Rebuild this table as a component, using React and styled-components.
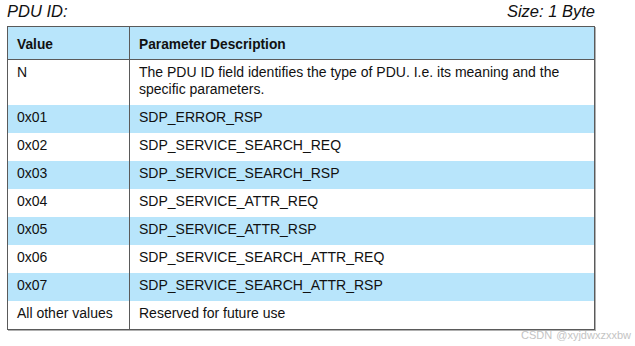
import React from "react";
import styled, { createGlobalStyle } from "styled-components";

const Global = createGlobalStyle`
  html, body { margin: 0; padding: 0; background: #ffffff; overflow: hidden; }
  body { font-family: "Liberation Sans", Arial, sans-serif; color: #111; }
`;

const Page = styled.div`
  position: relative;
  width: 635px;
  height: 346px;
  padding: 1px 0 0 7px;
  box-sizing: border-box;
  overflow: hidden;
`;

const TitleBar = styled.div`
  display: flex;
  justify-content: space-between;
  width: 588px;
  height: 20px;
  margin-bottom: 5px;
  font-style: italic;
  font-size: 16.5px;
  line-height: 20px;
  color: #111;
`;

const Table = styled.div`
  width: 588px;
  box-sizing: border-box;
  border: 1px solid #5a5a5a;
  box-shadow: 1px 1px 0 #b0b0b0;
`;

const Row = styled.div`
  display: grid;
  grid-template-columns: 121px 1px 1fr;
  background: ${(p) => (p.$shaded ? "#b8e5fb" : "#ffffff")};
  border-bottom: ${(p) => (p.$header ? "1px solid #5a5a5a" : "none")};
`;

const Divider = styled.div`
  background: #5a5a5a;
`;

const Cell = styled.div`
  font-size: ${(p) => (p.$header ? "13.75px" : "14px")};
  line-height: 17px;
  font-weight: ${(p) => (p.$header ? 700 : 400)};
  padding: ${(p) => (p.$header ? "9px 8px 6px 9px" : "4px 8px 7px 9px")};
  color: #111;
`;

const Watermark = styled.div`
  position: absolute;
  right: 4px;
  top: 329px;
  font-size: 11px;
  line-height: 13px;
  word-spacing: 1px;
  color: #c4c4c4;
  white-space: nowrap;
`;

const rows = [
  ["N", "The PDU ID field identifies the type of PDU. I.e. its meaning and the specific parameters."],
  ["0x01", "SDP_ERROR_RSP"],
  ["0x02", "SDP_SERVICE_SEARCH_REQ"],
  ["0x03", "SDP_SERVICE_SEARCH_RSP"],
  ["0x04", "SDP_SERVICE_ATTR_REQ"],
  ["0x05", "SDP_SERVICE_ATTR_RSP"],
  ["0x06", "SDP_SERVICE_SEARCH_ATTR_REQ"],
  ["0x07", "SDP_SERVICE_SEARCH_ATTR_RSP"],
  ["All other values", "Reserved for future use"],
];

export default function App() {
  return (
    <Page>
      <Global />
      <TitleBar>
        <span>PDU ID:</span>
        <span>Size: 1 Byte</span>
      </TitleBar>
      <Table>
        <Row $shaded $header>
          <Cell $header>Value</Cell>
          <Divider />
          <Cell $header>Parameter Description</Cell>
        </Row>
        {rows.map(([v, d], i) => (
          <Row key={v} $shaded={i % 2 === 1}>
            <Cell>{v}</Cell>
            <Divider />
            <Cell>{d}</Cell>
          </Row>
        ))}
      </Table>
      <Watermark>CSDN @xyjdwxzxxbw</Watermark>
    </Page>
  );
}
